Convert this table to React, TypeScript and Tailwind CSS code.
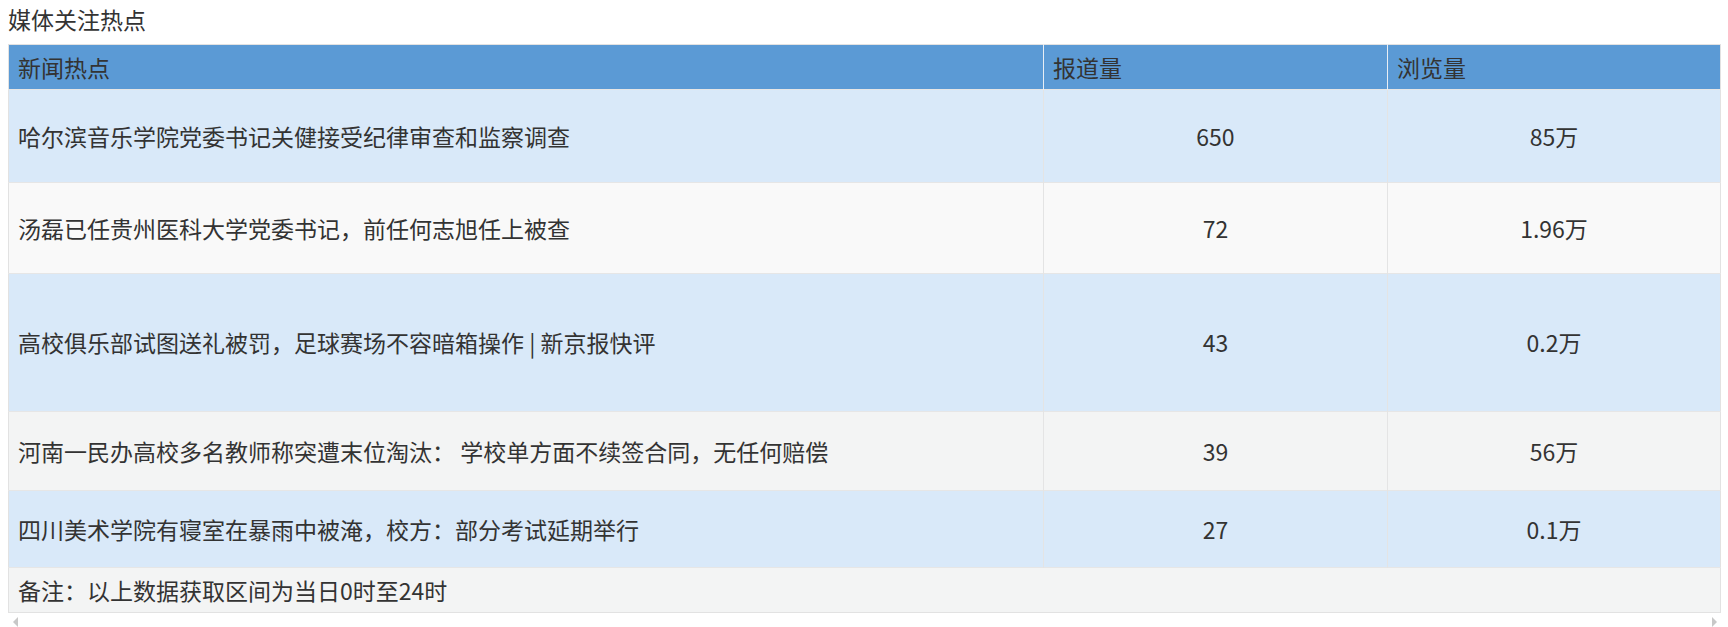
import React from 'react';

interface HotRow {
  title: string;
  reports: string;
  views: string;
  height: string;
  bg: string;
}

const rows: HotRow[] = [
  { title: '哈尔滨音乐学院党委书记关健接受纪律审查和监察调查', reports: '650', views: '85万', height: 'h-[93px]', bg: 'bg-[#d9e9f9]' },
  { title: '汤磊已任贵州医科大学党委书记，前任何志旭任上被查', reports: '72', views: '1.96万', height: 'h-[91px]', bg: 'bg-[#f9f9f9]' },
  { title: '高校俱乐部试图送礼被罚，足球赛场不容暗箱操作 | 新京报快评', reports: '43', views: '0.2万', height: 'h-[138px]', bg: 'bg-[#d9e9f9]' },
  { title: '河南一民办高校多名教师称突遭末位淘汰： 学校单方面不续签合同，无任何赔偿', reports: '39', views: '56万', height: 'h-[79px]', bg: 'bg-[#f3f4f4]' },
  { title: '四川美术学院有寝室在暴雨中被淹，校方：部分考试延期举行', reports: '27', views: '0.1万', height: 'h-[77px]', bg: 'bg-[#d9e9f9]' },
];

export default function App() {
  return (
    <div
      className="w-[1728px] h-[627px] bg-white text-[#333] text-[23px]"
      style={{ fontFamily: '"Noto Sans CJK SC", "Noto Sans", sans-serif' }}
    >
      <div className="h-[44px] px-2 leading-[36px] pt-[1px]">媒体关注热点</div>

      <div className="mx-2 w-[1712px]">
        <table className="w-full table-fixed border-collapse border border-[#e2e2e2]">
          <colgroup>
            <col className="w-[1035px]" />
            <col className="w-[344px]" />
            <col className="w-[333px]" />
          </colgroup>
          <thead>
            <tr className="h-[45px] bg-[#5b9ad5]">
              <th className="text-left font-normal px-[9px] border-r border-[#e8eef5]">新闻热点</th>
              <th className="text-left font-normal px-[9px] border-r border-[#e8eef5]">报道量</th>
              <th className="text-left font-normal px-[9px]">浏览量</th>
            </tr>
          </thead>
          <tbody>
            {rows.map((row, idx) => (
              <tr key={idx} className={`${row.height} ${row.bg} border-t border-[#e6e6e6]`}>
                <td className="px-[9px] border-r border-[#e4e4e4]">{row.title}</td>
                <td className="text-center border-r border-[#e4e4e4]">{row.reports}</td>
                <td className="text-center">{row.views}</td>
              </tr>
            ))}
            <tr className="h-[45px] bg-[#f3f4f4] border-t border-[#e6e6e6]">
              <td colSpan={3} className="px-[9px]">备注：以上数据获取区间为当日0时至24时</td>
            </tr>
          </tbody>
        </table>
      </div>

      {/* scrollbar arrows */}
      <div className="flex justify-between items-center h-[16px] pl-[13px] pr-[11px] mt-[1px]">
        <span className="w-0 h-0 border-y-[5px] border-y-transparent border-r-[5px] border-r-[#c8c8c8]"></span>
        <span className="w-0 h-0 border-y-[5px] border-y-transparent border-l-[5px] border-l-[#c8c8c8]"></span>
      </div>
    </div>
  );
}
